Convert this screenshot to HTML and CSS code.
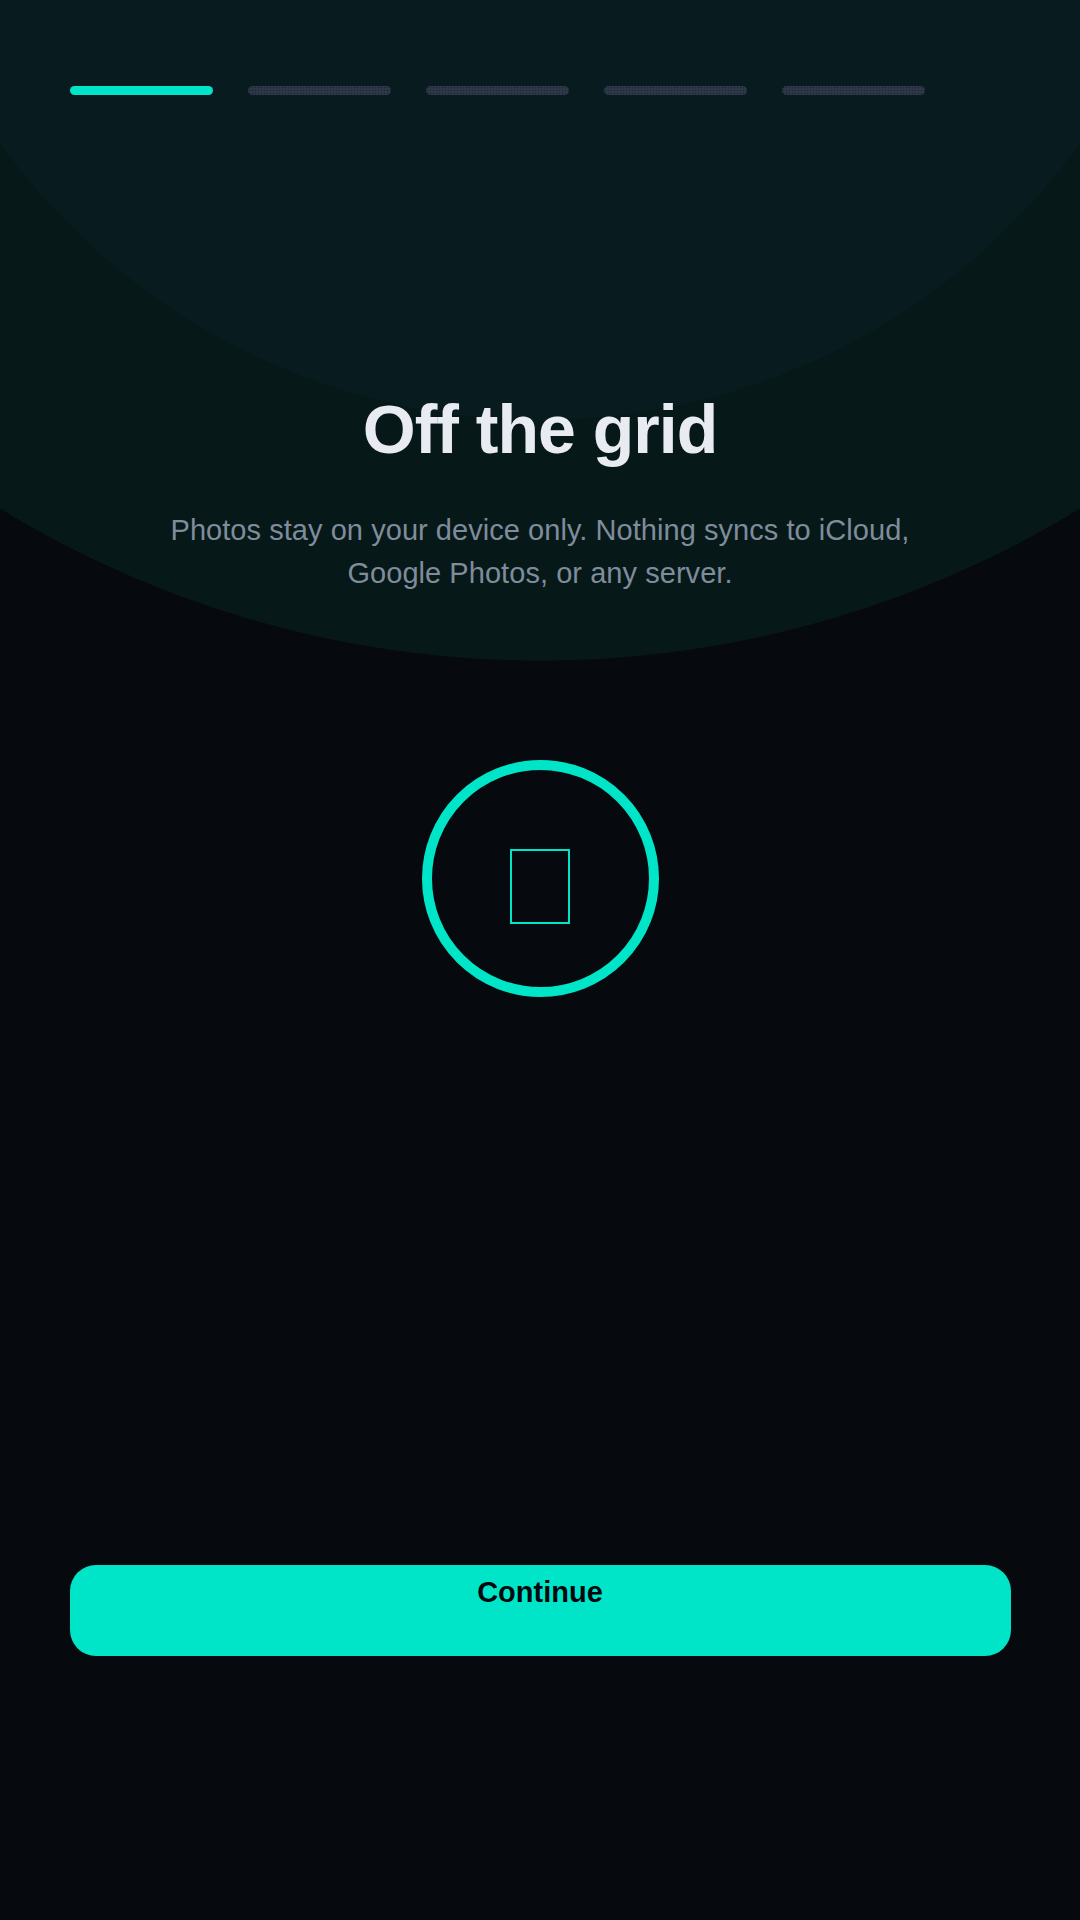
FILE: index.html
```html
<!DOCTYPE html>
<html lang="en">
  <head>
    <meta charset="UTF-8" />
    <meta name="viewport" content="width=device-width, initial-scale=1.0" />
    <title>Off the grid</title>
    <link rel="stylesheet" href="styles.css">
  </head>
  <body>
    <div class="screen">
      <div class="progress">
        <span class="step step-active"></span>
        <span class="step"></span>
        <span class="step"></span>
        <span class="step"></span>
        <span class="step"></span>
      </div>

      <h1>Off the grid</h1>
      <p class="lead">
        Photos stay on your device only. Nothing syncs to iCloud,<br />
        Google Photos, or any server.
      </p>

      <div class="ring">
        <span class="glyph"></span>
      </div>

      <button class="continue">Continue</button>
    </div>
  </body>
</html>
```

FILE: styles.css
```css
html,
body {
  margin: 0;
  height: 100%;
}
body {
  background-color: #06090e;
  background-image:
    radial-gradient(circle 665px at 540px -245px, #081c1f 99.9%, transparent 100%),
    radial-gradient(circle 1035px at 540px -374px, #071819 99.9%, transparent 100%);
  font-family: "Liberation Sans", Arial, sans-serif;
}
.screen {
  box-sizing: border-box;
  display: flex;
  flex-direction: column;
  align-items: center;
  min-height: 100%;
  padding: 86px 70px 0;
}
.progress {
  display: flex;
  gap: 35px;
  align-self: flex-start;
}
.step {
  width: 143px;
  height: 9px;
  border-radius: 5px;
  background-color: #2d3748;
  background-image: radial-gradient(circle at 1.5px 1.5px, #182029 0.9px, transparent 1px);
  background-size: 3px 3px;
}
.step-active {
  background-color: #00e5c8;
  background-image: none;
}
h1 {
  margin: 294px 0 0;
  font-size: 68px;
  line-height: 80px;
  letter-spacing: -1px;
  font-weight: 700;
  color: #e8ecf2;
}
.lead {
  margin: 40px 0 0;
  font-size: 29px;
  line-height: 43px;
  letter-spacing: 0.05px;
  text-align: center;
  color: #7f8c9b;
}
.ring {
  display: flex;
  justify-content: center;
  align-items: center;
  box-sizing: border-box;
  width: 237px;
  height: 237px;
  margin-top: 165px;
  padding-top: 16px;
  border: 10px solid #00e5c8;
  border-radius: 50%;
}
.glyph {
  box-sizing: border-box;
  width: 60px;
  height: 75px;
  border: 2px solid #00e5c8;
}
.continue {
  display: block;
  box-sizing: border-box;
  width: 941px;
  height: 91px;
  margin-top: 568px;
  padding: 10px 0 47px;
  border: none;
  border-radius: 26px;
  background-color: #00e5c8;
  color: #05080d;
  font-family: inherit;
  font-size: 29px;
  line-height: 34px;
  font-weight: 700;
  text-align: center;
}
```
